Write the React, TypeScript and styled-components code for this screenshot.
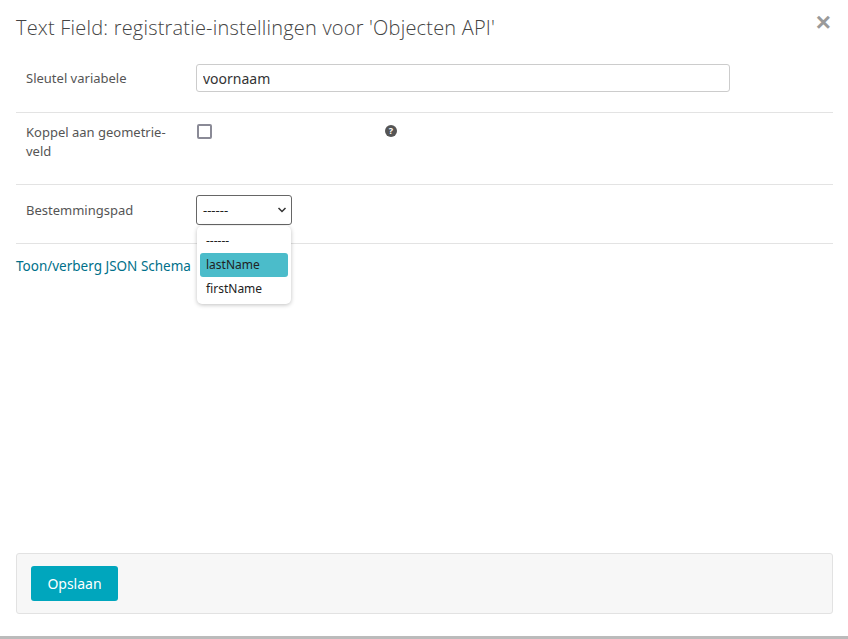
import React from 'react';
import styled, { createGlobalStyle } from 'styled-components';

const Global = createGlobalStyle`
  html, body { margin: 0; padding: 0; background: #fff; }
  body { font-family: "Noto Sans", "DejaVu Sans", sans-serif; }
`;

const Modal = styled.div`
  width: 848px;
  height: 639px;
  box-sizing: border-box;
  padding: 14px 15px 0 16px;
  display: flex;
  flex-direction: column;
  border-bottom: 3px solid #bbb;
`;

const Header = styled.div`
  display: flex;
  justify-content: space-between;
  align-items: flex-start;
  height: 50px;
`;

const Title = styled.h1`
  margin: 0;
  font-family: "Open Sans", "Noto Sans", sans-serif;
  font-size: 20px;
  font-weight: 300;
  color: #444;
  letter-spacing: 0.2px;
`;

const Close = styled.button`
  border: 0;
  background: none;
  color: #9a9a9a;
  font-size: 26px;
  font-weight: 700;
  line-height: 1;
  padding: 0 2px 0 0;
  margin-top: -5px;
  cursor: pointer;
`;

const Row = styled.div<{ $h: number; $pt: number }>`
  display: flex;
  align-items: flex-start;
  height: ${p => p.$h}px;
  border-bottom: 1px solid #e3e3e3;
  box-sizing: border-box;
  padding: ${p => p.$pt}px 0 0 10px;
`;

const Label = styled.label`
  width: 170px;
  flex-shrink: 0;
  font-size: 13px;
  line-height: 19px;
  color: #555;
  padding-top: 5px;
`;

const Input = styled.input`
  width: 534px;
  height: 28px;
  box-sizing: border-box;
  border: 1px solid #ccc;
  border-radius: 3px;
  padding: 0 6px;
  font: 14px "Noto Sans", sans-serif;
  color: #333;
`;

const Check = styled.span`
  width: 11px;
  height: 11px;
  border: 2px solid #8a8a96;
  border-radius: 2px;
  margin: 1px 0 0 1px;
`;

const Help = styled.span`
  margin: 2px 0 0 173px;
  width: 12px;
  height: 12px;
  border-radius: 50%;
  background: #555;
  color: #fff;
  font-size: 9px;
  font-weight: 700;
  line-height: 12px;
  text-align: center;
`;

const SelectWrap = styled.div`
  position: relative;
`;

const Select = styled.div`
  width: 96px;
  height: 30px;
  box-sizing: border-box;
  border: 1px solid #666;
  border-radius: 3px;
  display: flex;
  align-items: center;
  justify-content: space-between;
  padding: 0 4px 0 6px;
  font-size: 13px;
  color: #222;
`;

const Menu = styled.div`
  position: absolute;
  top: 31px;
  left: 1px;
  width: 94px;
  box-sizing: border-box;
  background: #fff;
  border-radius: 5px;
  box-shadow: 0 1px 4px rgba(0, 0, 0, 0.25);
  padding: 3px;
  z-index: 2;
`;

const Option = styled.div<{ $on?: boolean }>`
  height: 24px;
  line-height: 24px;
  padding: 0 6px;
  font-size: 12px;
  color: #222;
  border-radius: 3px;
  background: ${p => (p.$on ? '#4bbcca' : 'transparent')};
`;

const Link = styled.a`
  margin-top: 13px;
  font-size: 13.5px;
  color: #00708a;
  text-decoration: none;
`;

const Spacer = styled.div`
  flex: 1;
`;

const Footer = styled.div`
  height: 61px;
  box-sizing: border-box;
  margin-bottom: 22px;
  background: #f7f7f7;
  border: 1px solid #e2e2e2;
  border-radius: 3px;
  display: flex;
  align-items: center;
  padding-left: 14px;
`;

const Button = styled.button`
  height: 35px;
  width: 87px;
  border: 0;
  border-radius: 3px;
  background: #00a6bd;
  color: #fff;
  font: 14px "Noto Sans", sans-serif;
`;

export default function App() {
  return (
    <Modal>
      <Global />
      <Header>
        <Title>Text Field: registratie-instellingen voor 'Objecten API'</Title>
        <Close>×</Close>
      </Header>
      <Row $h={49} $pt={0}>
        <Label>Sleutel variabele</Label>
        <Input defaultValue="voornaam" />
      </Row>
      <Row $h={72} $pt={10}>
        <Label style={{ paddingTop: 0, width: 160, marginRight: 10 }}>Koppel aan geometrie-veld</Label>
        <Check />
        <Help>?</Help>
      </Row>
      <Row $h={59} $pt={10}>
        <Label style={{ paddingTop: 6 }}>Bestemmingspad</Label>
        <SelectWrap>
          <Select>
            <span>------</span>
            <svg width="10" height="8" viewBox="0 0 10 8">
              <path d="M1.5 2 L5 5.5 L8.5 2" fill="none" stroke="#333" strokeWidth="1.5" />
            </svg>
          </Select>
          <Menu>
            <Option>------</Option>
            <Option $on>lastName</Option>
            <Option>firstName</Option>
          </Menu>
        </SelectWrap>
      </Row>
      <Link href="#">Toon/verberg JSON Schema</Link>
      <Spacer />
      <Footer>
        <Button>Opslaan</Button>
      </Footer>
    </Modal>
  );
}
